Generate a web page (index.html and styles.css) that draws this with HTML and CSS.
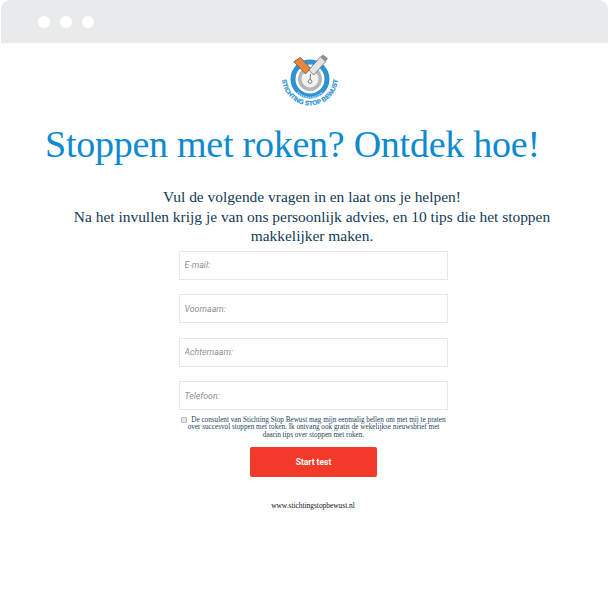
FILE: index.html
```html
<!DOCTYPE html>
<html lang="en">

<head>
  <meta charset="UTF-8">
  <meta name="viewport" content="width=device-width, initial-scale=1.0">
  <title>Stoppen met roken</title>
  <link rel="stylesheet" href="styles.css">
</head>

<body>
  <div class="browser-bar">
    <span class="dot"></span>
    <span class="dot"></span>
    <span class="dot"></span>
  </div>

  <div class="container">
    <svg class="logo" viewBox="0 0 70 60" width="70" height="60" aria-label="Stichting Stop Bewust">
      <defs>
        <path id="logoArc" d="M9 15 A28 28 0 1 0 61 15" />
      </defs>
      <circle cx="35" cy="27" r="19.5" fill="#2f92d2" />
      <circle cx="35" cy="27" r="14.5" fill="#fff" />
      <circle cx="35" cy="27" r="12" fill="#b4b7b8" />
      <circle cx="35" cy="27" r="8.5" fill="#f2f2f2" />
      <path d="M22.5 40 A17 17 0 0 0 47.5 40" fill="none" stroke="#9fd0ee" stroke-width="2" stroke-dasharray="1.5 0.8" />
      <path d="M35.5 22 L35 28" stroke="#7a7a7a" stroke-width="1" fill="none" />
      <circle cx="35" cy="29.5" r="1.9" fill="#fff" stroke="#7a7a7a" stroke-width="1" />
      <path d="M18.8 9.7 L25.5 5.3 L35.5 16.3 L30.5 22 Z" fill="#e8873a" stroke="#5a5a5a" stroke-width="0.8" />
      <path d="M33.8 18 L45.5 4.7 L50.5 9.7 L38.8 23 Z" fill="#e4e4e4" stroke="#6a6a6a" stroke-width="0.8" />
      <path d="M45.5 4.7 L48 2.5 L53 6.5 L50.5 9.7 Z" fill="#8f9192" />
      <text class="logo-text"><textPath href="#logoArc" startOffset="50%" text-anchor="middle">STICHTING STOP BEWUST</textPath></text>
    </svg>

    <h1>Stoppen met roken? Ontdek hoe!</h1>

    <p class="intro">Vul de volgende vragen in en laat ons je helpen!<br>Na het invullen krijg je van ons persoonlijk advies, en 10 tips die het stoppen makkelijker maken.</p>

    <form class="form">
      <input type="email" placeholder="E-mail:">
      <input type="text" placeholder="Voornaam:">
      <input type="text" placeholder="Achternaam:">
      <input type="tel" placeholder="Telefoon:">

      <label class="consent">
        <input type="checkbox">
        De consulent van Stichting Stop Bewust mag mijn eenmalig bellen om met mij te praten over succesvol stoppen met roken. Ik ontvang ook gratis de wekelijkse nieuwsbrief met daarin tips over stoppen met roken.
      </label>

      <button type="submit">Start test</button>
    </form>

    <p class="site">www.stichtingstopbewust.nl</p>
  </div>
</body>

</html>
```

FILE: styles.css
```css
body {
  margin: 0;
  padding: 0;
  height: 612px;
  overflow: hidden;
  background-color: #fff;
  font-family: "Liberation Serif", serif;
  color: #123a56;
}

.browser-bar {
  height: 43px;
  margin: 0 1px;
  padding-left: 37px;
  box-sizing: border-box;
  display: flex;
  align-items: center;
  gap: 10px;
  background-color: #e9eaeb;
  border-radius: 9px 9px 0 0;
}

.dot {
  width: 12px;
  height: 12px;
  border-radius: 50%;
  background-color: #fff;
}

.container {
  display: flex;
  flex-direction: column;
  align-items: center;
}

.logo {
  display: block;
  margin-top: 9px;
  margin-left: 10px;
}

.logo-text {
  font-family: "Liberation Sans", sans-serif;
  font-size: 6.4px;
  font-weight: bold;
  fill: #2f92d2;
  stroke: #2f92d2;
  stroke-width: 0.2px;
}

h1 {
  width: 609px;
  margin: 10px 0 0;
  padding-left: 45px;
  box-sizing: border-box;
  font-size: 38px;
  line-height: 44px;
  font-weight: normal;
  letter-spacing: -0.25px;
  color: #0d8ad0;
  white-space: nowrap;
}

.intro {
  width: 482px;
  margin: 21px 0 0 15px;
  font-size: 15.45px;
  line-height: 19.5px;
  text-align: center;
}

.form {
  width: 269px;
  margin-left: 18px;
  margin-top: 5px;
  display: flex;
  flex-direction: column;
  align-items: center;
}

.form input[type="email"],
.form input[type="text"],
.form input[type="tel"] {
  display: block;
  width: 100%;
  height: 29px;
  margin-bottom: 14.5px;
  padding: 0 4.5px;
  border: 1px solid #e8e8e8;
  box-sizing: border-box;
  font-family: Roboto, sans-serif;
  font-size: 8.8px;
  font-style: italic;
}

.form input::placeholder {
  color: #8f8f8f;
}

.consent {
  display: block;
  margin-top: -8px;
  width: 269px;
  font-size: 7.2px;
  line-height: 7.6px;
  text-align: center;
  color: #1d4560;
}

.consent input {
  appearance: none;
  width: 4px;
  height: 4px;
  margin: 0 2px 0 0;
  vertical-align: top;
  background-color: #e6e6e6;
  border: 1px solid #bdbdbd;
  border-radius: 1px;
  box-sizing: content-box;
}

button {
  display: block;
  width: 127px;
  height: 30px;
  margin-top: 8px;
  border: none;
  border-radius: 2px;
  background-color: #f23a2a;
  color: #fff;
  font-family: Roboto, sans-serif;
  font-size: 8.5px;
  font-weight: bold;
}

.site {
  margin: 24px 0 0 17px;
  font-size: 7.4px;
  line-height: 10px;
  color: #111;
}
```
